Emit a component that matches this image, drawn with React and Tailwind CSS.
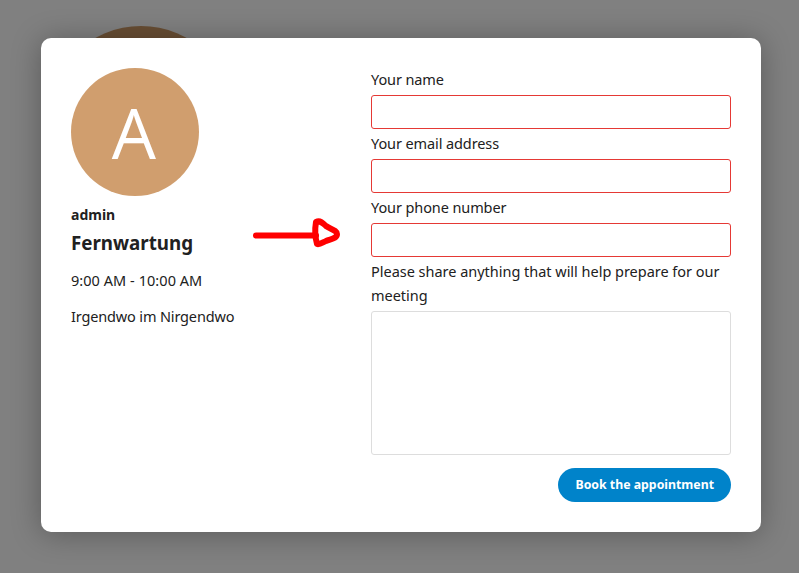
export default function App() {
  const font = "font-['Noto_Sans','Open_Sans',sans-serif]";
  const label = "text-[14.5px] leading-6 text-[#212121]";
  const redInput = "block w-full h-[34px] rounded-[3px] border border-[#e53935] bg-white";
  const tight = "tracking-[-0.1px]";
  return (
    <div className={`relative w-[799px] h-[573px] overflow-hidden bg-[#808080] ${font}`}>
      <div className="absolute left-[47px] top-[26px] w-[188px] h-[188px] rounded-full bg-[#684e34]" />
      <div className="absolute left-[41px] top-[38px] w-[720px] h-[494px] rounded-[10px] bg-white p-[30px] flex shadow-[0_2px_30px_rgba(0,0,0,0.3)]">
        <div className="w-[300px] shrink-0 flex flex-col items-start">
          <div className="w-32 h-32 rounded-full bg-[#d09e6e] flex items-center justify-center text-white text-[70px] font-normal font-['Open_Sans',sans-serif] leading-none pr-[2px]">
            A
          </div>
          <div className="mt-[9px] text-sm leading-5 font-bold text-[#212121]">admin</div>
          <div className="mt-[4px] text-[18.75px] leading-7 font-bold text-[#212121]">Fernwartung</div>
          <div className={`mt-[11px] ${label} tracking-[0.05px]`}>9:00 AM - 10:00 AM</div>
          <div className={`mt-3 ${label} tracking-[-0.15px]`}>Irgendwo im Nirgendwo</div>
        </div>
        <form className="flex-1 flex flex-col -mt-px">
          <label className={`${label} ${tight}`}>Your name</label>
          <div className={`mt-1 ${redInput}`} />
          <label className={`mt-[2px] ${label} ${tight}`}>Your email address</label>
          <div className={`mt-1 ${redInput}`} />
          <label className={`mt-[2px] ${label} ${tight}`}>Your phone number</label>
          <div className={`mt-1 ${redInput}`} />
          <label className={`mt-[2px] ${label} tracking-[-0.02px]`}>Please share anything that will help prepare for our meeting</label>
          <div className="mt-[4px] h-[144px] rounded-[3px] border border-[#dddddd] bg-white" />
          <div className="mt-[13px] flex justify-end">
            <button type="button" className="h-[34px] px-[17px] pt-px rounded-full bg-[#0083ca] text-white text-[12.3px] font-bold">
              Book the appointment
            </button>
          </div>
        </form>
      </div>
      <svg className="absolute left-[250px] top-[216px]" width="94" height="34" viewBox="0 0 94 34" fill="none">
        <path d="M6 19.5 H66" stroke="#ff0000" strokeWidth="6" strokeLinecap="round" />
        <path d="M66 6 C70 4 73 7 76 10 C80 13 87 14 87 18 C87 23 80 23 76 25 C73 26 70 29 67 28 C65 21 65 12 66 6 Z" stroke="#ff0000" strokeWidth="6" strokeLinejoin="round" />
      </svg>
    </div>
  );
}
